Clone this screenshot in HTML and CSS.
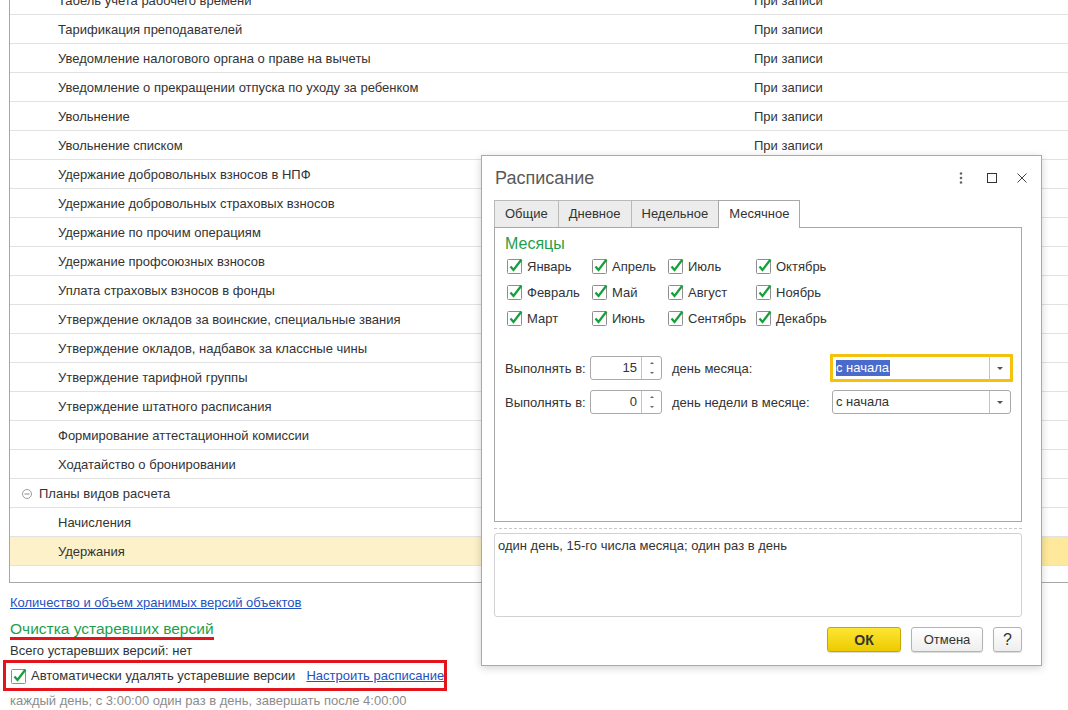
FILE: index.html
```html
<!DOCTYPE html>
<html lang="ru">
<head>
  <meta charset="UTF-8">
  <title>Настройки хранения версий объектов</title>
  <link rel="stylesheet" href="styles.css">
</head>
<body>
  <div class="list">
    <div class="row"><span class="name">Табель учета рабочего времени</span><span class="mode">При записи</span></div>
    <div class="row"><span class="name">Тарификация преподавателей</span><span class="mode">При записи</span></div>
    <div class="row"><span class="name">Уведомление налогового органа о праве на вычеты</span><span class="mode">При записи</span></div>
    <div class="row"><span class="name">Уведомление о прекращении отпуска по уходу за ребенком</span><span class="mode">При записи</span></div>
    <div class="row"><span class="name">Увольнение</span><span class="mode">При записи</span></div>
    <div class="row"><span class="name">Увольнение списком</span><span class="mode">При записи</span></div>
    <div class="row"><span class="name">Удержание добровольных взносов в НПФ</span><span class="mode"></span></div>
    <div class="row"><span class="name">Удержание добровольных страховых взносов</span><span class="mode"></span></div>
    <div class="row"><span class="name">Удержание по прочим операциям</span><span class="mode"></span></div>
    <div class="row"><span class="name">Удержание профсоюзных взносов</span><span class="mode"></span></div>
    <div class="row"><span class="name">Уплата страховых взносов в фонды</span><span class="mode"></span></div>
    <div class="row"><span class="name">Утверждение окладов за воинские, специальные звания</span><span class="mode"></span></div>
    <div class="row"><span class="name">Утверждение окладов, надбавок за классные чины</span><span class="mode"></span></div>
    <div class="row"><span class="name">Утверждение тарифной группы</span><span class="mode"></span></div>
    <div class="row"><span class="name">Утверждение штатного расписания</span><span class="mode"></span></div>
    <div class="row"><span class="name">Формирование аттестационной комиссии</span><span class="mode"></span></div>
    <div class="row"><span class="name">Ходатайство о бронировании</span><span class="mode"></span></div>
    <div class="row group">
      <span class="name">
        <svg class="collapse" width="10" height="10" viewBox="0 0 10 10"><circle cx="5" cy="5" r="4.5" fill="none" stroke="#9a9a9a"/><path d="M2.5 5h5" stroke="#8a8a8a"/></svg>
        Планы видов расчета
      </span>
      <span class="mode"></span>
    </div>
    <div class="row"><span class="name">Начисления</span><span class="mode"></span></div>
    <div class="row current"><span class="name">Удержания</span><span class="mode"></span></div>
  </div>

  <div class="footer">
    <div class="first-link"><a class="link" href="#">Количество и объем хранимых версий объектов</a></div>
    <h2 class="section">Очистка устаревших версий</h2>
    <div class="note">Всего устаревших версий: нет</div>
    <div class="auto-clean">
      <label class="check">
        <svg width="16" height="16" viewBox="0 0 16 16"><rect x="0.5" y="1.5" width="14" height="14" rx="1" fill="#fff" stroke="#8e8e8e"/><path d="M3.5 8.5 6.5 12 14.5 1.5" fill="none" stroke="#16a03c" stroke-width="2.3"/></svg>
        Автоматически удалять устаревшие версии
      </label>
      <a class="link" href="#">Настроить расписание</a>
    </div>
    <div class="hint">каждый день; с 3:00:00 один раз в день, завершать после 4:00:00</div>
  </div>

  <div class="dialog">
    <div class="dlg-head">
      <span class="dlg-title">Расписание</span>
      <div class="dlg-tools">
        <svg width="4" height="12" viewBox="0 0 4 12"><circle cx="2" cy="1.5" r="1.3" fill="#666"/><circle cx="2" cy="6" r="1.3" fill="#666"/><circle cx="2" cy="10.5" r="1.3" fill="#666"/></svg>
        <svg width="10" height="10" viewBox="0 0 10 10"><rect x="0.5" y="0.5" width="9" height="9" fill="none" stroke="#333"/></svg>
        <svg width="10" height="10" viewBox="0 0 10 10"><path d="M0.5 0.5 9.5 9.5M9.5 0.5 0.5 9.5" stroke="#444"/></svg>
      </div>
    </div>

    <div class="tabs">
      <span class="tab">Общие</span>
      <span class="tab">Дневное</span>
      <span class="tab">Недельное</span>
      <span class="tab active">Месячное</span>
    </div>
    <div class="panel">
      <div class="months-title">Месяцы</div>
      <div class="months">
        <label class="month"><svg width="16" height="16" viewBox="0 0 16 16"><rect x="0.5" y="1.5" width="14" height="14" rx="1" fill="#fff" stroke="#8e8e8e"/><path d="M3.5 8.5 6.5 12 14.5 1.5" fill="none" stroke="#16a03c" stroke-width="2.3"/></svg>Январь</label>
        <label class="month"><svg width="16" height="16" viewBox="0 0 16 16"><rect x="0.5" y="1.5" width="14" height="14" rx="1" fill="#fff" stroke="#8e8e8e"/><path d="M3.5 8.5 6.5 12 14.5 1.5" fill="none" stroke="#16a03c" stroke-width="2.3"/></svg>Апрель</label>
        <label class="month"><svg width="16" height="16" viewBox="0 0 16 16"><rect x="0.5" y="1.5" width="14" height="14" rx="1" fill="#fff" stroke="#8e8e8e"/><path d="M3.5 8.5 6.5 12 14.5 1.5" fill="none" stroke="#16a03c" stroke-width="2.3"/></svg>Июль</label>
        <label class="month"><svg width="16" height="16" viewBox="0 0 16 16"><rect x="0.5" y="1.5" width="14" height="14" rx="1" fill="#fff" stroke="#8e8e8e"/><path d="M3.5 8.5 6.5 12 14.5 1.5" fill="none" stroke="#16a03c" stroke-width="2.3"/></svg>Октябрь</label>
        <label class="month"><svg width="16" height="16" viewBox="0 0 16 16"><rect x="0.5" y="1.5" width="14" height="14" rx="1" fill="#fff" stroke="#8e8e8e"/><path d="M3.5 8.5 6.5 12 14.5 1.5" fill="none" stroke="#16a03c" stroke-width="2.3"/></svg>Февраль</label>
        <label class="month"><svg width="16" height="16" viewBox="0 0 16 16"><rect x="0.5" y="1.5" width="14" height="14" rx="1" fill="#fff" stroke="#8e8e8e"/><path d="M3.5 8.5 6.5 12 14.5 1.5" fill="none" stroke="#16a03c" stroke-width="2.3"/></svg>Май</label>
        <label class="month"><svg width="16" height="16" viewBox="0 0 16 16"><rect x="0.5" y="1.5" width="14" height="14" rx="1" fill="#fff" stroke="#8e8e8e"/><path d="M3.5 8.5 6.5 12 14.5 1.5" fill="none" stroke="#16a03c" stroke-width="2.3"/></svg>Август</label>
        <label class="month"><svg width="16" height="16" viewBox="0 0 16 16"><rect x="0.5" y="1.5" width="14" height="14" rx="1" fill="#fff" stroke="#8e8e8e"/><path d="M3.5 8.5 6.5 12 14.5 1.5" fill="none" stroke="#16a03c" stroke-width="2.3"/></svg>Ноябрь</label>
        <label class="month"><svg width="16" height="16" viewBox="0 0 16 16"><rect x="0.5" y="1.5" width="14" height="14" rx="1" fill="#fff" stroke="#8e8e8e"/><path d="M3.5 8.5 6.5 12 14.5 1.5" fill="none" stroke="#16a03c" stroke-width="2.3"/></svg>Март</label>
        <label class="month"><svg width="16" height="16" viewBox="0 0 16 16"><rect x="0.5" y="1.5" width="14" height="14" rx="1" fill="#fff" stroke="#8e8e8e"/><path d="M3.5 8.5 6.5 12 14.5 1.5" fill="none" stroke="#16a03c" stroke-width="2.3"/></svg>Июнь</label>
        <label class="month"><svg width="16" height="16" viewBox="0 0 16 16"><rect x="0.5" y="1.5" width="14" height="14" rx="1" fill="#fff" stroke="#8e8e8e"/><path d="M3.5 8.5 6.5 12 14.5 1.5" fill="none" stroke="#16a03c" stroke-width="2.3"/></svg>Сентябрь</label>
        <label class="month"><svg width="16" height="16" viewBox="0 0 16 16"><rect x="0.5" y="1.5" width="14" height="14" rx="1" fill="#fff" stroke="#8e8e8e"/><path d="M3.5 8.5 6.5 12 14.5 1.5" fill="none" stroke="#16a03c" stroke-width="2.3"/></svg>Декабрь</label>
      </div>

      <div class="run first">
        <span>Выполнять в:</span>
        <div class="spin"><span class="spin-value">15</span><span class="spin-btns"><i class="up"></i><i class="down"></i></span></div>
        <span class="run-text">день месяца:</span>
        <div class="select focused"><span class="sel-value"><span class="selected">с начала</span></span><span class="sel-btn"><i></i></span></div>
      </div>
      <div class="run">
        <span>Выполнять в:</span>
        <div class="spin"><span class="spin-value">0</span><span class="spin-btns"><i class="up"></i><i class="down"></i></span></div>
        <span class="run-text">день недели в месяце:</span>
        <div class="select"><span class="sel-value">с начала</span><span class="sel-btn"><i></i></span></div>
      </div>
    </div>

    <div class="dashed"></div>
    <div class="summary">один день, 15-го числа месяца; один раз в день</div>

    <div class="buttons">
      <button class="btn ok">ОК</button>
      <button class="btn">Отмена</button>
      <button class="btn help">?</button>
    </div>
  </div>
</body>
</html>
```

FILE: styles.css
```css
html, body {
  height: 100%;
}
body {
  margin: 0;
  overflow: hidden;
  background: #fff;
  color: #333;
  font-family: "Liberation Sans", Arial, sans-serif;
  font-size: 13px;
}

/* list of objects */
.list {
  margin: -14px 0 0 9px;
  border-left: 1px solid #a7a7a7;
  border-bottom: 1px solid #a7a7a7;
  padding-bottom: 16px;
}
.row {
  display: flex;
  height: 28px;
  line-height: 30px;
  border-bottom: 1px solid #e2e2e2;
}
.row .name {
  flex: 0 0 744px;
  box-sizing: border-box;
  padding-left: 48px;
  white-space: nowrap;
}
.row .mode {
  flex: 1;
  white-space: nowrap;
}
.row.group .name {
  display: flex;
  align-items: center;
  padding-left: 12px;
  padding-top: 2px;
  box-sizing: border-box;
}
.collapse {
  margin-right: 7px;
}
.row.current .name { background: #fcf1c8; }
.row.current .mode { background: #fde89c; }

/* bottom block */
.footer {
  padding-left: 10px;
}
.link {
  color: #2452c0;
  text-decoration: underline;
  line-height: 16px;
  white-space: nowrap;
}
.first-link {
  margin-top: 12px;
  line-height: 16px;
}
.section {
  display: block;
  width: max-content;
  margin: 9px 0 0;
  font-size: 15.5px;
  font-weight: normal;
  line-height: 17px;
  color: #1f9e4a;
  border-bottom: 3px solid #e3141c;
}
.note {
  margin-top: 3px;
  line-height: 15px;
}
.auto-clean {
  display: flex;
  align-items: center;
  box-sizing: border-box;
  width: 444px;
  height: 31px;
  margin: 2px 0 0 -7px;
  padding-left: 5px;
  border: 3px solid #e3141c;
  white-space: nowrap;
}
.check {
  display: flex;
  align-items: center;
  flex: none;
}
.check svg {
  margin-right: 4px;
}
.auto-clean .link {
  margin-left: 11px;
}
.hint {
  margin-top: 2px;
  line-height: 15px;
  color: #8c8c8c;
}

/* schedule dialog */
.dialog {
  position: absolute;
  left: 481px;
  top: 155px;
  width: 561px;
  height: 511px;
  box-sizing: border-box;
  display: flex;
  flex-direction: column;
  padding: 0 19px 0 12px;
  background: #fff;
  border: 1px solid #a9a9a9;
  box-shadow: 0 2px 8px rgba(0,0,0,.18);
}
.dlg-head {
  display: flex;
  align-items: center;
  height: 44px;
  flex: none;
}
.dlg-title {
  padding-left: 1px;
  font-size: 18px;
  color: #5a5a5a;
}
.dlg-tools {
  display: flex;
  align-items: center;
  gap: 24px;
  margin-left: auto;
  margin-right: -5px;
}
.dlg-tools svg:last-child {
  margin-left: -4px;
}

.tabs {
  display: flex;
  height: 27px;
  flex: none;
}
.tab {
  box-sizing: border-box;
  height: 27px;
  line-height: 25px;
  padding: 0 10px;
  margin-right: -1px;
  background: #ececec;
  border: 1px solid #b9b9b9;
  border-bottom: none;
}
.tab.active {
  position: relative;
  z-index: 1;
  height: 28px;
  background: #fff;
  border-color: #a8a8a8;
}
.panel {
  box-sizing: border-box;
  height: 295px;
  flex: none;
  padding: 7px 10px 0;
  border: 1px solid #a8a8a8;
}
.months-title {
  font-size: 16px;
  line-height: 18px;
  color: #1f9e4a;
}
.months {
  display: grid;
  grid-template-columns: 85px 76px 88px auto;
  grid-auto-rows: 26px;
  margin-left: 2px;
}
.month {
  display: flex;
  align-items: center;
}
.month svg {
  margin-right: 4px;
}

.run {
  display: grid;
  grid-template-columns: 85px 72px 170px 179px;
  align-items: center;
  height: 24px;
  margin-top: 10px;
}
.run.first {
  margin-top: 25px;
}
.run-text {
  padding-left: 10px;
}
.spin {
  display: flex;
  box-sizing: border-box;
  height: 24px;
  border: 1px solid #aaa;
  border-radius: 3px;
}
.spin-value {
  flex: 1;
  text-align: right;
  padding-right: 4px;
  line-height: 22px;
}
.spin-btns {
  width: 20px;
  border-left: 1px solid #c4c4c4;
  display: flex;
  flex-direction: column;
  align-items: center;
  justify-content: space-between;
  padding: 5px 0;
  box-sizing: border-box;
}
.spin-btns i {
  width: 0; height: 0;
  border-left: 2px solid transparent;
  border-right: 2px solid transparent;
}
.spin-btns .up { border-bottom: 2px solid #666; }
.spin-btns .down { border-top: 2px solid #666; }

.select {
  display: flex;
  box-sizing: border-box;
  height: 24px;
  border: 1px solid #aaa;
  border-radius: 3px;
}
.select.focused {
  border-color: #f4c20d;
  border-radius: 0;
  outline: 2px solid #f4c20d;
}
.sel-value {
  flex: 1;
  padding-left: 3px;
  line-height: 22px;
}
.selected {
  display: inline-block;
  line-height: 16px;
  padding-right: 1px;
  background: #4a6bcb;
  color: #fff;
}
.sel-btn {
  width: 20px;
  border-left: 1px solid #c4c4c4;
  display: flex;
  align-items: center;
  justify-content: center;
}
.sel-btn i {
  width: 0; height: 0;
  border-left: 3px solid transparent;
  border-right: 3px solid transparent;
  border-top: 3px solid #555;
}

.dashed {
  flex: none;
  margin-top: 6px;
  border-top: 1px dashed #c8c8c8;
}
.summary {
  flex: none;
  box-sizing: border-box;
  height: 84px;
  margin-top: 4px;
  padding: 4px 3px;
  line-height: 16px;
  border: 1px solid #d2d2d2;
  border-radius: 3px;
}
.buttons {
  display: flex;
  justify-content: flex-end;
  gap: 10px;
  margin-top: 10px;
}
.btn {
  box-sizing: border-box;
  height: 25px;
  width: 72px;
  padding: 0;
  font-family: inherit;
  font-size: 13px;
  color: #333;
  background: linear-gradient(#fff, #eee);
  border: 1px solid #b3b3b3;
  border-radius: 3px;
  box-shadow: 0 1px 1px rgba(0,0,0,.15);
  cursor: pointer;
}
.btn.ok {
  width: 74px;
  font-weight: bold;
  font-size: 14px;
  background: linear-gradient(#fde534, #eccb00);
  border-color: #c7a600;
}
.btn.help {
  width: 29px;
  font-size: 16px;
}
```
